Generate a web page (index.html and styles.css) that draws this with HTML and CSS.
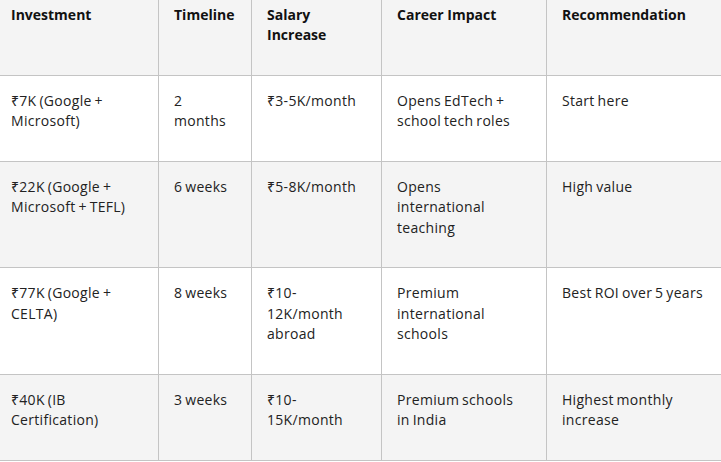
FILE: index.html
```html
<!DOCTYPE html>
<html lang="en">
<head>
<meta charset="utf-8">
<title>Certification comparison</title>
<link rel="stylesheet" href="styles.css">
</head>
<body>
<div class="scroller">
<table class="compare">
  <colgroup>
    <col class="c1"><col class="c2"><col class="c3"><col class="c4"><col class="c5">
  </colgroup>
  <thead>
    <tr>
      <th>Investment</th>
      <th>Timeline</th>
      <th>Salary Increase</th>
      <th>Career Impact</th>
      <th>Recommendation</th>
    </tr>
  </thead>
  <tbody>
    <tr>
      <td>₹7K (Google + Microsoft)</td>
      <td>2 months</td>
      <td>₹3-5K/month</td>
      <td>Opens EdTech + school tech roles</td>
      <td>Start here</td>
    </tr>
    <tr>
      <td>₹22K (Google + Microsoft + TEFL)</td>
      <td>6 weeks</td>
      <td>₹5-8K/month</td>
      <td>Opens<br>international teaching</td>
      <td>High value</td>
    </tr>
    <tr>
      <td>₹77K (Google + CELTA)</td>
      <td>8 weeks</td>
      <td>₹10-12K/month abroad</td>
      <td>Premium international schools</td>
      <td>Best ROI over 5 years</td>
    </tr>
    <tr>
      <td>₹40K (IB Certification)</td>
      <td>3 weeks</td>
      <td>₹10-15K/month</td>
      <td>Premium schools<br>in India</td>
      <td>Highest monthly increase</td>
    </tr>
  </tbody>
</table>
</div>
</body>
</html>
```
FILE: styles.css
```css
html, body {
  margin: 0;
  padding: 0;
  background: #ffffff;
}
body {
  width: 721px;
  height: 462px;
  overflow: hidden;
  font-family: "Open Sans", "Noto Sans", "DejaVu Sans", sans-serif;
  font-size: 14px;
  color: #222222;
}
.scroller {
  overflow: hidden;
  width: 721px;
  height: 462px;
}
.compare {
  margin: -11px 0 0 -5px;
  width: 726px;
  table-layout: fixed;
  border-collapse: collapse;
}
.c1 { width: 163px; }
.c2 { width: 93px; }
.c3 { width: 130px; }
.c4 { width: 165px; }
.c5 { width: 175px; }
.compare th,
.compare td {
  border: 1px solid #c4c4c4;
  padding: 15px 15px 29.5px;
  line-height: 20.25px;
  text-align: left;
  vertical-align: top;
  word-wrap: break-word;
}
.compare th {
  font-weight: 700;
  color: #111111;
  background: #f4f4f4;
}
.compare td {
  font-weight: 400;
  letter-spacing: 0.3px;
  word-spacing: -1px;
}
.compare tbody tr:nth-child(even) td {
  background: #f4f4f4;
}
```
